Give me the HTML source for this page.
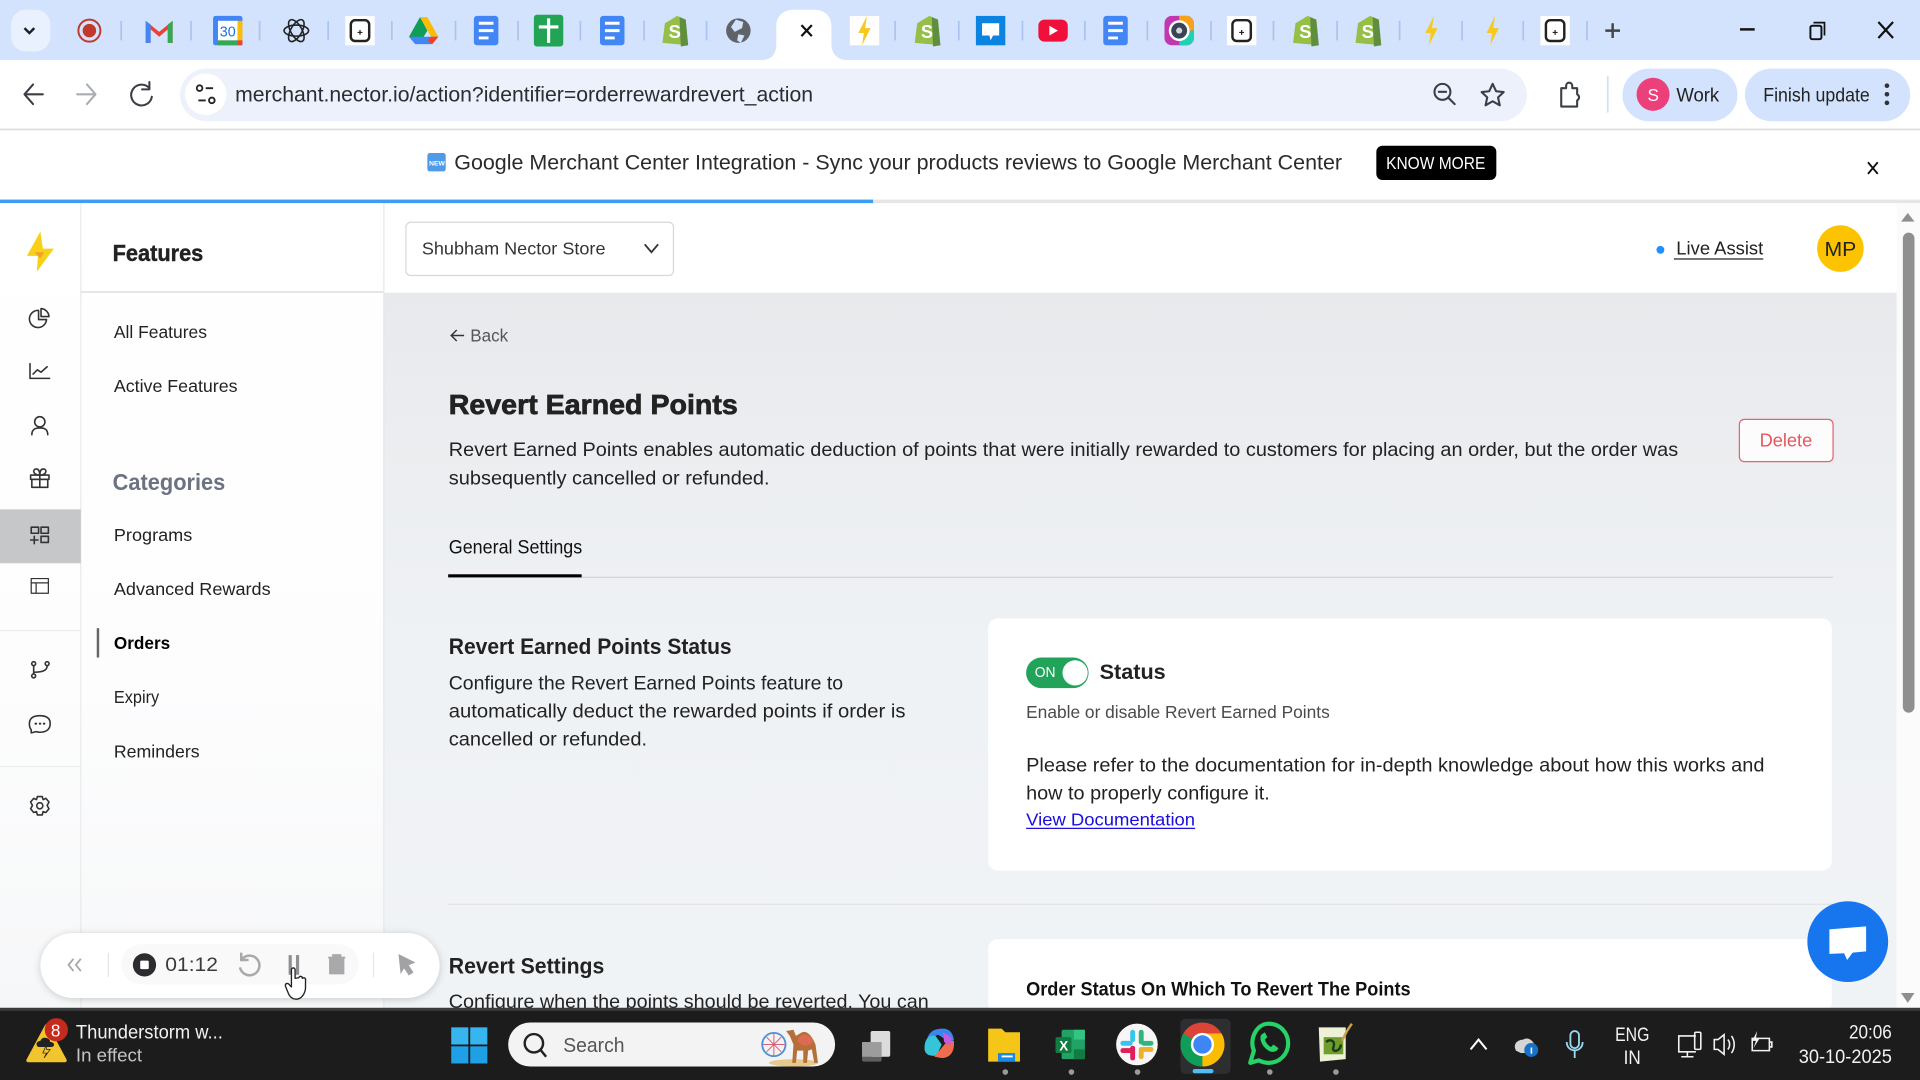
<!DOCTYPE html>
<html lang="en"><head><meta charset="utf-8"><title>Revert Earned Points</title>
<style>
html,body{margin:0;padding:0;width:1920px;height:1080px;overflow:hidden;background:#fff}
svg{display:block;filter:blur(.3px)}
text{font-family:"Liberation Sans",Arial,sans-serif;fill:#222}
.i{fill:none;stroke:#333;stroke-width:1.3;stroke-linecap:round;stroke-linejoin:round}
.c{stroke:#3a3f45;fill:none;stroke-width:1.7;stroke-linecap:round;stroke-linejoin:round}
.sep{stroke:#a9c4ee;stroke-width:1.4}
.w{fill:#fff}
.h{stroke:#222;stroke-width:.35}
</style></head><body>
<svg xmlns="http://www.w3.org/2000/svg" width="1920" height="1080" viewBox="0 0 1568 882">
<defs>
<linearGradient id="bg" x1="0" y1="0" x2="0" y2="1"><stop offset="0" stop-color="#e7e9ec"/><stop offset=".2" stop-color="#ebedf0"/><stop offset=".5" stop-color="#eff2f5"/><stop offset="1" stop-color="#f0f3f6"/></linearGradient>
<linearGradient id="sb" x1="0" y1="0" x2="0" y2="1"><stop offset="0" stop-color="#fff"/><stop offset=".6" stop-color="#fdfdfe"/><stop offset="1" stop-color="#f6f7f8"/></linearGradient>
<g id="docs"><rect x="-10" y="-12" width="20" height="24" rx="2.5" fill="#4285f4"/><path d="M-6-6H6M-6 0H6M-6 6H2" stroke="#fff" stroke-width="2.4"/></g>
<g id="shop"><path d="M-8-6 2-12 9-9 11 12-10 10Z" fill="#95bf47"/><path d="M4-11 9-9 11 12 5 13Z" fill="#5e8e3e"/><text x="-5" y="6" font-size="15" font-weight="700" style="fill:#fff">S</text></g>
<g id="notion"><rect x="-12" y="-12" width="24" height="24" fill="#fff"/><rect x="-7.5" y="-8.5" width="15" height="17" rx="3.5" fill="none" stroke="#222" stroke-width="2"/><path d="M-2 1.500H2M0-.5V3.500" stroke="#222"/></g>
<g id="bolt"><path d="M2-12-5 2H-.5L-2 12 5-2H.5Z" fill="#f7c81e"/></g>
</defs>

<!-- tab strip -->
<rect width="1568" height="49" fill="#d3e3fd"/>
<rect x="9" y="8" width="32" height="34" rx="12" fill="#e9f1fe"/>
<path d="M20 23l4 4 4-4" fill="none" stroke="#1f1f1f" stroke-width="2"/>
<path class="sep" d="M99 17V33M156 17V33M212 17V33M268 17V33M320 17V33M372 17V33M423 17V33M474 17V33M526 17V33M577 17V33M731 17V33M783 17V33M835 17V33M886 17V33M937 17V33M989 17V33M1040 17V33M1092 17V33M1143 17V33M1194 17V33M1244 17V33M1296 17V33"/>
<circle cx="73" cy="25" r="9" fill="none" stroke="#c0392b" stroke-width="1.6"/><circle cx="73" cy="25" r="5.500" fill="#c0392b"/>
<g transform="translate(130 25)"><path d="M-11 10V-8L0 1 11-8V10H7V-1L0 5-7-1V10Z" fill="#ea4335"/><path d="M-11 10V-8L-7-5V10Z" fill="#4285f4"/><path d="M11 10V-8L7-5V10Z" fill="#34a853"/></g>
<g transform="translate(186 25)"><rect x="-12" y="-12" width="24" height="24" rx="2" fill="#4285f4"/><rect x="-8" y="-8" width="16" height="16" fill="#fff"/><rect x="8" y="-8" width="4" height="16" fill="#fbbc04"/><rect x="-8" y="8" width="16" height="4" fill="#34a853"/><rect x="8" y="8" width="4" height="4" fill="#ea4335"/><text x="-6.500" y="5" font-size="12" textLength="13" lengthAdjust="spacingAndGlyphs" style="fill:#1a73e8">30</text></g>
<g transform="translate(242 25)" fill="none" stroke="#222" stroke-width="1.300"><ellipse rx="10" ry="4.500" transform="rotate(60)"/><ellipse rx="10" ry="4.500" transform="rotate(-60)"/><ellipse rx="10" ry="4.500"/></g>
<use href="#notion" x="294" y="25"/>
<g transform="translate(346 25)"><path d="M-3-11H3L12 5H6Z" fill="#fbbc04"/><path d="M-3-11 3 0-3 10-12 5Z" fill="#0f9d58"/><path d="M-12 5H12L7 11H-7Z" fill="#4285f4"/><path d="M6 5 12 5 7 11 3 8Z" fill="#ea4335"/></g>
<use href="#docs" x="397" y="25"/>
<g transform="translate(448 25)"><rect x="-12" y="-13" width="24" height="26" rx="2.500" fill="#23a455"/><path d="M-8-3H8M0-10V10" stroke="#fff" stroke-width="2.600"/></g>
<use href="#docs" x="500" y="25"/>
<use href="#shop" x="551" y="25"/>
<g transform="translate(603 25)"><circle r="10" fill="#5f6368"/><path d="M-2-9 4-7 3-2-3 1-6-3ZM0 3 5 4 2 10-1 8Z" fill="#d3e3fd"/></g>
<path d="M622 49C630 49 634 44 634 36V21C634 13 640 8 648 8H665C673 8 679 13 679 21V36C679 44 684 49 692 49Z" class="w"/>
<path d="M654.500 20.500 663 29.500M663 20.500 654.500 29.500" stroke="#111" stroke-width="1.800"/>
<g transform="translate(706 25)"><rect x="-12" y="-12" width="24" height="24" fill="#fff"/><use href="#bolt"/></g>
<use href="#shop" x="757" y="25"/>
<g transform="translate(809 25)"><rect x="-12" y="-12" width="24" height="24" fill="#0a84e0"/><path d="M-7-6H7V4H2L0 8-1 4H-7Z" fill="#fff"/></g>
<g transform="translate(860 25)"><rect x="-12" y="-9" width="24" height="18" rx="5" fill="#f0103a"/><path d="M-3-4 4 0-3 4Z" fill="#fff"/></g>
<use href="#docs" x="911" y="25"/>
<g transform="translate(963 25)"><rect x="-12" y="-12" width="24" height="24" rx="6" fill="#c037b0"/><path d="M0-12H6A6 6 0 0 1 12-6V0H0Z" fill="#f6a21a"/><path d="M12 0V6A6 6 0 0 1 6 12H0V0Z" fill="#1fd1b4"/><circle r="8.500" fill="#fff"/><circle r="6.500" fill="#3a4454"/><circle r="2.500" fill="#cfd6de"/></g>
<use href="#notion" x="1014" y="25"/>
<use href="#shop" x="1066" y="25"/>
<use href="#shop" x="1117" y="25"/>
<use href="#bolt" x="1169" y="25"/>
<use href="#bolt" x="1219" y="25"/>
<use href="#notion" x="1270" y="25"/>
<path d="M1311 25H1323M1317 19V31" stroke="#444" stroke-width="2"/>
<path d="M1421 24H1433" stroke="#111" stroke-width="2"/>
<rect x="1478.500" y="21" width="9" height="11" rx="1.500" fill="none" stroke="#111" stroke-width="1.600"/><path d="M1481 18.500H1490V29" fill="none" stroke="#111" stroke-width="1.400"/>
<path d="M1534 18 1546 31M1546 18 1534 31" stroke="#111" stroke-width="1.800"/>

<!-- toolbar -->
<path d="M0 106V59A10 10 0 0 1 10 49H622V49H1558A10 10 0 0 1 1568 59V106Z" class="w"/>
<rect y="105" width="1568" height="1.500" fill="#dcdee1"/>
<path class="c" d="M35 77H20M27 69 20 77 27 85"/>
<path class="c" style="stroke:#a9adb3" d="M63 77H78M71 69 78 77 71 85"/>
<path class="c" d="M122 72A8.500 8.500 0 1 0 124 79M122 67V73H116"/>
<rect x="147" y="56" width="1100" height="43" rx="21.500" fill="#ecf1fb"/>
<circle cx="168" cy="77" r="17" class="w"/>
<g fill="none" stroke="#222" stroke-width="1.500"><circle cx="163" cy="72" r="2.300"/><path d="M168 72H174M162 82H168"/><circle cx="173" cy="82" r="2.300"/></g>
<text x="192" y="83" font-size="17" textLength="472" lengthAdjust="spacingAndGlyphs" style="fill:#2a2d31">merchant.nector.io/action?identifier=orderrewardrevert_action</text>
<g class="c"><circle cx="1178" cy="75" r="6.500"/><path d="M1183 80 1188 85M1175 75H1181"/></g>
<path class="c" d="M1219 68.500 1221.800 74.500 1228 75.200 1223.400 79.500 1224.800 86 1219 82.700 1213.200 86 1214.600 79.500 1210 75.200 1216.200 74.500Z"/>
<path class="c" d="M1275 72V87H1288V82A2.800 2.800 0 0 0 1288 77V72H1284V70A2.500 2.500 0 0 0 1279 70V72Z"/>
<path d="M1313 62V92" stroke="#d5dfee" stroke-width="1.400"/>
<rect x="1325" y="56" width="94" height="43" rx="21.500" fill="#d3e3fd"/>
<circle cx="1350" cy="77" r="13.500" fill="#ec407a"/>
<text x="1345.500" y="82.500" font-size="14" style="fill:#fff">S</text>
<text x="1369" y="83" font-size="16" textLength="35" lengthAdjust="spacingAndGlyphs">Work</text>
<rect x="1425" y="56" width="135" height="43" rx="21.500" fill="#d3e3fd"/>
<text x="1440" y="83" font-size="16" textLength="87" lengthAdjust="spacingAndGlyphs">Finish update</text>
<g fill="#333"><circle cx="1541" cy="70" r="1.900"/><circle cx="1541" cy="77" r="1.900"/><circle cx="1541" cy="84" r="1.900"/></g>

<!-- banner -->
<rect y="106.500" width="1568" height="57" class="w"/>
<rect x="349" y="125" width="15" height="15" rx="2" fill="#4f9bea"/>
<text x="350.500" y="135" font-size="5.500" font-weight="700" style="fill:#fff">NEW</text>
<text x="371" y="138.500" font-size="17" textLength="725" lengthAdjust="spacingAndGlyphs" style="fill:#2b2b2b">Google Merchant Center Integration - Sync your products reviews to Google Merchant Center</text>
<rect x="1124" y="119" width="98" height="28" rx="5" fill="#000"/>
<text x="1132" y="138" font-size="14" textLength="81" lengthAdjust="spacingAndGlyphs" style="fill:#fff">KNOW MORE</text>
<path d="M1525.500 132.500 1533.500 142M1533.500 132.500 1525.500 142" stroke="#111" stroke-width="1.500"/>
<rect y="163" width="1568" height="3" fill="#e6e6e6"/>
<rect y="163" width="713" height="3" fill="#3d9cf3"/>

<!-- app background -->
<rect y="166" width="1568" height="658" fill="#fff"/>
<rect x="313" y="239" width="1236" height="585" fill="url(#bg)"/>
<rect x="66" y="166" width="247" height="658" fill="url(#sb)"/>
<rect x="0" y="166" width="66" height="658" fill="url(#sb)"/>
<path d="M66 166V824" stroke="#e9eaec"/>
<path d="M313.500 166V824" stroke="#e6e7e9"/>
<path d="M66 238.500H313" stroke="#dcdde0" stroke-width="1.200"/>
<rect x="1549" y="166" width="19" height="658" fill="#fbfbfb"/>
<path d="M1552.500 181 1558 174 1563.500 181Z" fill="#8f8f8f"/>
<rect x="1554" y="190" width="9.500" height="392" rx="4.700" fill="#8f8f8f"/>
<path d="M1552.500 811 1558 819 1563.500 811Z" fill="#8f8f8f"/>

<!-- rail -->
<path d="M33 189 22 209H31L30 222 44 203H35Z" fill="#f6d118"/><path d="M28 206H36L33 211Z" fill="#f3a02b"/>
<rect y="416" width="66" height="44" fill="#c6c7c9"/>
<path d="M0 515H66M0 626H66" stroke="#eceded"/>
<g class="i" transform="translate(32.500 0)">
<path d="M-1 253.500A7 7 0 1 0 5.500 261H-1Z"/><path d="M1 252A7 7 0 0 1 7.500 258.500H1Z"/>
<path d="M-8 297V309H8M-5.500 305.500-2 302 1 304 6 299.500"/>
<circle cx="0" cy="344.500" r="4.200"/><path d="M-6.500 355C-6.500 350-3 349.500 0 349.500S6.500 350 6.500 355"/>
<rect x="-7.500" y="388" width="15" height="3.500"/><rect x="-6.500" y="391.500" width="13" height="6.500"/><path d="M0 388V398M0 388C-6 388-6 383-3 383-1 383 0 385 0 388 0 385 1 383 3 383 6 383 6 388 0 388Z"/>
<rect x="-7" y="430.500" width="6" height="5"/><rect x="1" y="430.500" width="6" height="5"/><rect x="1" y="438" width="6" height="5"/><path d="M-7.500 441H-1.500M-4.500 438V444"/>
<rect x="-7" y="472.500" width="14" height="12" stroke-width="1"/><path d="M-7 476H7M-3 476V484.500" stroke-width="1"/>
<circle cx="-5" cy="542" r="1.600"/><circle cx="-5" cy="552" r="1.600"/><circle cx="6" cy="542" r="1.600"/><path d="M-5 544V550M-5 549C1 549 6 548 6 544"/>
<path d="M0 584.500C-6 584.500-8.500 587-8.500 591-8.500 593-8 595-7 596V598.500L-3 597.500C-2 598-1 598 0 598 6 598 8.500 595 8.500 591S6 584.500 0 584.500Z"/><path d="M-3.500 591H-3M0 591H.4M3.300 591H3.700" stroke-width="1.700"/>
<circle cx="0" cy="658" r="2.500"/><path d="M-2 650.500H2L2.700 653 5 652 7.500 655 6 657.800 7.500 660.500 5 663.500 2.700 662.800 2 665.500H-2L-2.700 662.800-5 663.500-7.500 660.500-6 657.800-7.500 655-5 652-2.700 653Z"/>
</g>

<!-- sidebar -->
<text x="92" y="213" font-size="18.500" font-weight="700" textLength="74" lengthAdjust="spacingAndGlyphs" class="h">Features</text>
<g font-size="14.500" style="fill:#333">
<text x="93" y="276" textLength="76" lengthAdjust="spacingAndGlyphs">All Features</text>
<text x="93" y="320" textLength="101" lengthAdjust="spacingAndGlyphs">Active Features</text>
<text x="93" y="442" textLength="64" lengthAdjust="spacingAndGlyphs">Programs</text>
<text x="93" y="486" textLength="128" lengthAdjust="spacingAndGlyphs">Advanced Rewards</text>
<text x="93" y="574" textLength="37" lengthAdjust="spacingAndGlyphs">Expiry</text>
<text x="93" y="618.500" textLength="70" lengthAdjust="spacingAndGlyphs">Reminders</text>
</g>
<text x="92" y="400" font-size="18.500" font-weight="700" textLength="92" lengthAdjust="spacingAndGlyphs" style="fill:#6b7280">Categories</text>
<text x="93" y="530" font-size="14.500" font-weight="700" textLength="46" lengthAdjust="spacingAndGlyphs" style="fill:#000">Orders</text>
<rect x="79" y="513" width="2" height="24" fill="#666"/>

<!-- top header -->
<rect x="331.500" y="181.500" width="218.500" height="43.500" rx="4" fill="#fff" stroke="#d6d7d9"/>
<text x="344.500" y="208" font-size="14.500" textLength="150" lengthAdjust="spacingAndGlyphs" style="fill:#333">Shubham Nector Store</text>
<path d="M526.500 199.500 532 206 537.500 199.500" fill="none" stroke="#333" stroke-width="1.500"/>
<circle cx="1356" cy="204" r="3.200" fill="#1e90ff"/>
<text x="1369" y="208" font-size="15" textLength="71" lengthAdjust="spacingAndGlyphs">Live Assist</text>
<rect x="1367" y="211" width="73" height="1" fill="#222"/>
<circle cx="1503" cy="203" r="19" fill="#fdc300"/>
<text x="1490" y="209" font-size="16.500" textLength="26" lengthAdjust="spacingAndGlyphs">MP</text>

<!-- content -->
<path d="M379 274H368.500M373 269.500 368.500 274 373 278.500" fill="none" stroke="#333" stroke-width="1.200"/>
<text x="384" y="279" font-size="14.500" textLength="31" lengthAdjust="spacingAndGlyphs" style="fill:#555">Back</text>
<text x="366.500" y="338" font-size="23" font-weight="700" textLength="236" lengthAdjust="spacingAndGlyphs" class="h" style="stroke-width:.6">Revert Earned Points</text>
<g font-size="15.500">
<text x="366.500" y="372.500" textLength="1004" lengthAdjust="spacingAndGlyphs">Revert Earned Points enables automatic deduction of points that were initially rewarded to customers for placing an order, but the order was</text>
<text x="366.500" y="395.500" textLength="262" lengthAdjust="spacingAndGlyphs">subsequently cancelled or refunded.</text>
<text x="366.500" y="563" textLength="322" lengthAdjust="spacingAndGlyphs">Configure the Revert Earned Points feature to</text>
<text x="366.500" y="586" textLength="373" lengthAdjust="spacingAndGlyphs">automatically deduct the rewarded points if order is</text>
<text x="366.500" y="609" textLength="162" lengthAdjust="spacingAndGlyphs">cancelled or refunded.</text>
</g>
<rect x="1420.500" y="342.500" width="76.500" height="34.500" rx="4" fill="#fdfcfc" stroke="#e2666b"/>
<text x="1437" y="364.500" font-size="15" textLength="43" lengthAdjust="spacingAndGlyphs" style="fill:#e4575f">Delete</text>
<text x="366.500" y="452" font-size="15.500" textLength="109" lengthAdjust="spacingAndGlyphs" style="fill:#111">General Settings</text>
<rect x="366" y="471" width="1131" height="1" fill="#d2d4d7"/>
<rect x="366" y="469" width="109" height="2.500" fill="#000"/>
<text x="366.500" y="534" font-size="18" font-weight="700" textLength="231" lengthAdjust="spacingAndGlyphs">Revert Earned Points Status</text>

<rect x="807" y="505" width="689" height="206" rx="8" fill="#fff"/>
<rect x="838" y="537" width="51" height="25" rx="12.500" fill="#21a35a"/>
<circle cx="878" cy="549.500" r="10.300" fill="#fff"/>
<text x="845" y="553" font-size="12" textLength="17" lengthAdjust="spacingAndGlyphs" style="fill:#fff">ON</text>
<text x="898" y="554.500" font-size="17.500" font-weight="700" textLength="54" lengthAdjust="spacingAndGlyphs">Status</text>
<text x="838" y="586.500" font-size="14.500" textLength="248" lengthAdjust="spacingAndGlyphs" style="fill:#4a4a4a">Enable or disable Revert Earned Points</text>
<g font-size="15.500">
<text x="838" y="630" textLength="603" lengthAdjust="spacingAndGlyphs">Please refer to the documentation for in-depth knowledge about how this works and</text>
<text x="838" y="653" textLength="199" lengthAdjust="spacingAndGlyphs">how to properly configure it.</text>
</g>
<text x="838" y="674" font-size="14.500" textLength="138" lengthAdjust="spacingAndGlyphs" style="fill:#1a0dde">View Documentation</text>
<rect x="838" y="676" width="138" height="1" fill="#1a0dde"/>

<rect x="366" y="738" width="1131" height="1" fill="#e1e3e6"/>
<text x="366.500" y="795" font-size="18" font-weight="700" textLength="127" lengthAdjust="spacingAndGlyphs">Revert Settings</text>
<text x="366.500" y="823" font-size="15.500" textLength="392" lengthAdjust="spacingAndGlyphs">Configure when the points should be reverted. You can</text>
<rect x="807" y="767" width="689" height="60" rx="8" fill="#fff"/>
<text x="838" y="813" font-size="15.500" font-weight="700" textLength="314" lengthAdjust="spacingAndGlyphs" style="fill:#111">Order Status On Which To Revert The Points</text>

<!-- chat bubble -->
<circle cx="1509" cy="769" r="33" fill="#1776ee"/>
<path d="M1494 759 1524 756.500V777L1513 778 1508.500 784 1506 778.500 1494 779Z" fill="#fff"/>

<!-- recorder -->
<rect x="33" y="762" width="326" height="53" rx="26.500" fill="#fff" style="filter:drop-shadow(0 1px 3px rgba(0,0,0,.18))"/>
<rect x="99" y="771" width="194" height="33" rx="16.500" fill="#f9f9fa"/>
<path d="M60 783 56 788 60 793M66 783 62 788 66 793" fill="none" stroke="#a8a8ab" stroke-width="1.500"/>
<path d="M88.500 778V798M305 778V798" stroke="#e6e6e8"/>
<circle cx="118" cy="788" r="9.500" fill="#2b2b30"/><rect x="114.500" y="784.500" width="7" height="7" rx="1" fill="#fff"/>
<text x="135" y="793" font-size="16" textLength="43" lengthAdjust="spacingAndGlyphs" style="fill:#3a3a3e">01:12</text>
<path d="M198 783A8 8 0 1 1 196 790M197 778V784H203" fill="none" stroke="#a9a9ac" stroke-width="2"/>
<path d="M237 780V796M243 780V796" stroke="#8f8f93" stroke-width="2.600"/>
<path d="M268 782H282M272 782V780H278V782M269.500 782V795H280.500V782" fill="#a9a9ac" stroke="#a9a9ac" stroke-width="1.500"/>
<path d="M326 780 338 786 333 788 337 794 334 796 330 790 327.500 794Z" fill="#a2a2a6" stroke="#a2a2a6"/>
<path d="M238 792C238 790 241 790 241 792V799L244 798.500C245 796.500 247 797.500 247 799 248.500 798 250 799 249.500 801V807C249 812 246 816 242 816 238 816 236 813 235 810L233 805C233 803 235 802 237 805L238 806Z" fill="#fff" stroke="#222" stroke-width="1.100" stroke-linejoin="round"/>

<!-- taskbar -->
<rect y="824" width="1568" height="58" fill="#1c1c1d"/>
<rect y="823" width="1568" height="2.500" fill="#3a3b3d"/>
<path d="M38 838 53 866H23Z" fill="#f2c42e" stroke="#f2c42e" stroke-width="3" stroke-linejoin="round"/>
<path d="M32 855C29 855 29 850 33 850 34 846 41 847 41 851 45 851 45 855 42 855Z" fill="#222"/><path d="M38 853 35 860H38L36 864 41 857H38Z" fill="#f2c42e" stroke="#222" stroke-width=".6"/>
<circle cx="46" cy="841" r="9.500" fill="#c42b1c"/>
<text x="41.500" y="846.500" font-size="14" style="fill:#fff">8</text>
<text x="62" y="848" font-size="15.500" textLength="120" lengthAdjust="spacingAndGlyphs" style="fill:#f2f2f2">Thunderstorm w...</text>
<text x="62" y="867" font-size="15" textLength="54" lengthAdjust="spacingAndGlyphs" style="fill:#c4c4c4">In effect</text>
<g fill="#37b5ee"><rect x="368.500" y="839" width="14" height="14"/><rect x="384" y="839" width="14" height="14"/><rect x="368.500" y="854.500" width="14" height="14" fill="#1fa0e6"/><rect x="384" y="854.500" width="14" height="14" fill="#1fa0e6"/></g>
<rect x="415" y="835" width="267" height="36" rx="18" fill="#f3f3f3"/>
<circle cx="436" cy="852" r="7.500" fill="none" stroke="#222" stroke-width="2"/><path d="M441.500 857.500 446 863" stroke="#222" stroke-width="2"/>
<text x="460" y="859" font-size="16.500" textLength="50" lengthAdjust="spacingAndGlyphs" style="fill:#555">Search</text>
<circle cx="632" cy="853" r="9.500" fill="none" stroke="#4f8fd8" stroke-width="1.500"/><path d="M632 844V862M623 853H641M626 847 638 859M638 847 626 859" stroke="#d9607a" stroke-width=".8"/>
<ellipse cx="648" cy="868" rx="20" ry="3" fill="#e8c98c"/>
<path d="M642 842 648 841 650 846 655 843C660 841 664 848 666 853L668 868H665L663 857 660 858 659 868H656V858H651L650 868H647L648 853 645 846Z" fill="#b5703a"/><path d="M651 850C654 842 662 844 664 851 660 855 655 855 651 850Z" fill="#dd6a52"/>
<rect x="704" y="851" width="16" height="16" rx="1.500" fill="#5f5f5f"/><rect x="711" y="842" width="16" height="21" rx="1.500" fill="#dcdcdc"/><rect x="704" y="851" width="16" height="12" fill="#9c9c9c"/>
<g transform="translate(767 852)"><path d="M-10-3C-8-11-2-12 3-12 8-12 11-9 12-3L8 3 4-4-1-7Z" fill="#3d85ee"/><path d="M-12 4C-12-4-8-7-3-6L2 1 -2 10C-8 11-12 9-12 4Z" fill="#35c4d8"/><path d="M12-2C13 8 8 12 2 12L-4 11 1 5 6-1Z" fill="#f06c4d"/><path d="M3-9 10-5 9 2 4-1Z" fill="#c65be0"/></g>
<g transform="translate(820 853)"><path d="M-13-13H-2L1-10H13V14H-13Z" fill="#f5c518"/><rect x="-5" y="7" width="14" height="7" fill="#1a8ae5"/><rect x="-2" y="9" width="9" height="1.500" fill="#fff"/></g>
<g transform="translate(874 853)"><rect x="-7" y="-12" width="19" height="24" rx="1.500" fill="#21a366"/><rect x="3" y="-12" width="9" height="8" fill="#33c481"/><rect x="3" y="4" width="9" height="8" fill="#107c41"/><rect x="-12" y="-6" width="13" height="13" rx="1.500" fill="#107c41"/><text x="-9" y="5" font-size="11" font-weight="700" style="fill:#fff">X</text></g>
<circle cx="928.500" cy="853" r="17" fill="#f7f5f5"/>
<g stroke-width="4" stroke-linecap="round"><path d="M925 843V849" stroke="#36c5f0"/><path d="M917 852H923" stroke="#36c5f0"/><path d="M932 843V851" stroke="#2eb67d"/><path d="M940 852H934" stroke="#2eb67d"/><path d="M932 863V857" stroke="#ecb22e"/><path d="M940 857H934" stroke="#ecb22e"/><path d="M925 864V856" stroke="#e01e5a"/><path d="M917 858H923" stroke="#e01e5a"/></g>
<rect x="964" y="832" width="41" height="45" rx="4" fill="#2d2e30"/>
<g transform="translate(982 853)"><circle r="18" fill="#dc4437"/><path d="M0 0-15.600-9A18 18 0 0 0 0 18L9 2Z" fill="#0f9d58"/><path d="M0 0 0 18A18 18 0 0 0 15.600-9H0Z" fill="#fbbc04"/><circle r="9.500" fill="#fff"/><circle r="7.500" fill="#3f86f5"/></g>
<rect x="974" y="873" width="17" height="3.500" rx="1.700" fill="#52bdf0"/>
<g transform="translate(1036 852)"><path d="M-15 16-12 6C-16-3-10-16 0-16 10-16 16-8 16 0 16 9 9 16 0 16-3 16-6 15-8 14Z" fill="none" stroke="#25d366" stroke-width="3.400" stroke-linejoin="round"/><path d="M-6-7C-8-3-5 3 0 6 3 8 7 7 8 4L4 1 2 3C0 2-2 0-3-3L-1-5-3-9Z" fill="#25d366"/></g>
<g transform="translate(1089 853)"><path d="M-12-14H10V12L-11 14Z" fill="#eef1d6"/><rect x="-8" y="-6" width="16" height="14" fill="#6e9f2e"/><path d="M-6-2C-3-5 2-3 0 2S6 6 6 0" stroke="#1d3d14" stroke-width="2" fill="none"/><path d="M11-11 15-17M11-11 7-3" stroke="#c9a24a" stroke-width="2"/></g>
<g fill="#9a9a9a"><circle cx="821" cy="875.500" r="2.300"/><circle cx="875" cy="875.500" r="2.300"/><circle cx="929" cy="875.500" r="2.300"/><circle cx="1037" cy="875.500" r="2.300"/><circle cx="1091" cy="875.500" r="2.300"/></g>
<path d="M1201 857 1207.500 849 1214 857" fill="none" stroke="#fff" stroke-width="1.700"/>
<path d="M1238 858C1235 852 1240 849 1244 849 1248 846 1254 851 1253 855L1250 860H1242Z" fill="#d5d5d5"/><circle cx="1250.500" cy="857.500" r="5.700" fill="#1572c4"/><rect x="1250" y="855.500" width="1.300" height="5" fill="#fff"/>
<rect x="1282.500" y="842" width="7" height="14" rx="3.500" fill="none" stroke="#9bd8ee" stroke-width="1.500"/><path d="M1279.500 851C1279.500 860 1292.500 860 1292.500 851M1286 858V864" fill="none" stroke="#9bd8ee" stroke-width="1.500"/>
<text x="1319" y="850" font-size="15.500" textLength="28" lengthAdjust="spacingAndGlyphs" style="fill:#f2f2f2">ENG</text>
<text x="1326" y="869" font-size="15.500" textLength="14" lengthAdjust="spacingAndGlyphs" style="fill:#f2f2f2">IN</text>
<g fill="none" stroke="#f2f2f2" stroke-width="1.300"><path d="M1385 846H1371V859H1385M1378 859V863H1373M1378 863H1383"/><rect x="1384" y="843" width="5" height="14" rx="1"/>
<path d="M1400 849H1403L1408 845V861L1403 857H1400ZM1411 849C1413 851 1413 855 1411 857M1414 846C1417 850 1417 856 1414 860"/>
<path d="M1431 848H1445V858H1431ZM1445 851H1447V855H1445"/></g>
<path d="M1435 842 1431 850H1434L1432 856 1437 848H1434Z" fill="#f2f2f2"/>
<text x="1510" y="848" font-size="15.500" textLength="35" lengthAdjust="spacingAndGlyphs" style="fill:#f2f2f2">20:06</text>
<text x="1469" y="868" font-size="15.500" textLength="76" lengthAdjust="spacingAndGlyphs" style="fill:#f2f2f2">30-10-2025</text>
</svg>
</body></html>
